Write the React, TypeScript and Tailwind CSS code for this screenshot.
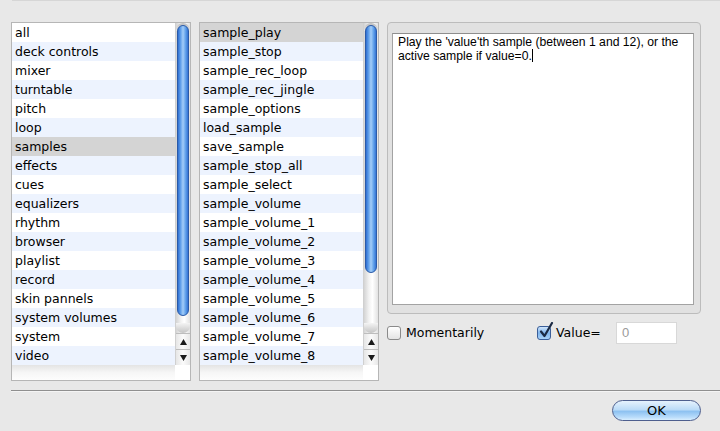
import React from "react";

const list1 = [
  "all",
  "deck controls",
  "mixer",
  "turntable",
  "pitch",
  "loop",
  "samples",
  "effects",
  "cues",
  "equalizers",
  "rhythm",
  "browser",
  "playlist",
  "record",
  "skin pannels",
  "system volumes",
  "system",
  "video",
];

const list2 = [
  "sample_play",
  "sample_stop",
  "sample_rec_loop",
  "sample_rec_jingle",
  "sample_options",
  "load_sample",
  "save_sample",
  "sample_stop_all",
  "sample_select",
  "sample_volume",
  "sample_volume_1",
  "sample_volume_2",
  "sample_volume_3",
  "sample_volume_4",
  "sample_volume_5",
  "sample_volume_6",
  "sample_volume_7",
  "sample_volume_8",
];

function Scrollbar({ thumb }: { thumb: number }) {
  return (
    <div className="w-[15px] h-[342px] flex flex-col border-l border-[#d0d0d0]">
      <div className="relative flex-1 bg-[linear-gradient(to_right,#d4d4d4,#f2f2f2_35%,#ffffff_60%,#e2e2e2)]">
        <div className="absolute left-0 right-0 top-0 h-[8px] rounded-t-full bg-[linear-gradient(to_bottom,#bdbdbd,#e8e8e8)]" />
        <div className="absolute left-0 right-0 bottom-0 h-[10px] rounded-b-full bg-[linear-gradient(to_bottom,#f4f4f4,#c4c4c4)]" />
        <div
          className="absolute left-[1px] right-[1px] top-[2px] rounded-full border border-[#2a5aa8] bg-[linear-gradient(to_right,#2f6fd2,#5f9ee9_25%,#a3cdf8_50%,#64a3eb_75%,#3474d4)]"
          style={{ height: thumb }}
        />
      </div>
      <div className="h-[16px] flex items-center justify-center border-t border-[#bdbdbd] bg-[linear-gradient(to_right,#e6e6e6,#fbfbfb_50%,#e8e8e8)]">
        <svg width="7" height="6" viewBox="0 0 7 6">
          <polygon points="3.5,0 7,6 0,6" fill="#1a1a1a" />
        </svg>
      </div>
      <div className="h-[16px] flex items-center justify-center border-t border-[#bdbdbd] bg-[linear-gradient(to_right,#e6e6e6,#fbfbfb_50%,#e8e8e8)]">
        <svg width="7" height="6" viewBox="0 0 7 6">
          <polygon points="0,0 7,0 3.5,6" fill="#1a1a1a" />
        </svg>
      </div>
    </div>
  );
}

function ListBox({ items, selected, thumb }: { items: string[]; selected: number; thumb: number }) {
  return (
    <div className="w-[180px] h-[359px] border border-[#b6b6b6] bg-white flex flex-col shrink-0">
      <div className="flex h-[342px]">
        <div className="flex-1 flex flex-col">
          {items.map((t, i) => (
            <div
              key={t}
              className={
                "h-[19px] pl-[3px] text-[12.5px] leading-[20px] text-black whitespace-nowrap overflow-hidden " +
                (i === selected ? "bg-[#d4d4d4]" : i % 2 === 1 ? "bg-[#edf3fe]" : "bg-white")
              }
            >
              {t}
            </div>
          ))}
        </div>
        <Scrollbar thumb={thumb} />
      </div>
      <div className="flex h-[15px]">
        <div className="flex-1 bg-[linear-gradient(to_bottom,#e4e4e4,#f6f6f6_50%,#fdfdfd)]" />
        <div className="w-[15px] bg-white" />
      </div>
    </div>
  );
}

export default function App() {
  return (
    <div className="w-[720px] h-[431px] bg-[#e8e8e8] flex flex-col font-['DejaVu_Sans',sans-serif] overflow-hidden">
      <div className="h-px ml-[12px] bg-[#d6d6d6]" />
      <div className="flex pl-[11px] pt-[21px]">
        <ListBox items={list1} selected={6} thumb={291} />
        <div className="ml-[8px]">
          <ListBox items={list2} selected={0} thumb={248} />
        </div>
        <div className="ml-[8px] w-[314px] flex flex-col">
          <div className="h-[292px] border border-[#bcbcbc] rounded-[4px] bg-[#e1e1e1] pl-[4px] pr-[6px] pt-[10px]">
            <div className="h-[272px] bg-white border border-[#a3a3a3] border-t-[#8e8e8e] pl-[5px] pt-[1px] font-['Liberation_Sans',sans-serif] text-[12.2px] leading-[14px] text-black">
              Play the 'value'th sample (between 1 and 12), or the
              <br />
              active sample if value=0.
              <span className="inline-block w-px h-[13px] bg-black align-[-2px]" />
            </div>
          </div>
          <div className="mt-[8px] h-[22px] flex items-center text-[12.5px] text-black">
            <div className="w-[150px] flex items-center">
              <div className="w-[14px] h-[14px] rounded-[3px] border border-[#8a8a8a] bg-[linear-gradient(to_bottom,#ffffff,#e4e4e4)]" />
              <span className="ml-[5px]">Momentarily</span>
            </div>
            <div className="w-[79px] flex items-center">
              <div className="relative w-[14px] h-[14px] rounded-[3px] border border-[#3a5e99] bg-[linear-gradient(to_bottom,#cfe5fb,#7fb4ec_50%,#a9d2f8)]">
                <svg className="absolute left-[1px] -top-[5px]" width="15" height="17" viewBox="0 0 15 17">
                  <path d="M2 9.5 L5.5 14 L13 1" fill="none" stroke="#1b2a44" strokeWidth="2.2" strokeLinecap="round" strokeLinejoin="round" />
                </svg>
              </div>
              <span className="ml-[5px]">Value=</span>
            </div>
            <div className="w-[61px] h-[22px] bg-white border border-[#d8d8d8] pl-[5px] flex items-center text-[#9a9a9a] font-['Liberation_Sans',sans-serif] text-[13px]">
              0
            </div>
          </div>
        </div>
      </div>
      <div className="mt-[9px] ml-[11px] h-px bg-[#8f8f8f]" />
      <div className="h-px ml-[11px] bg-[#f4f4f4]" />
      <div className="mt-[8px] flex justify-end pr-[19px]">
        <div className="w-[89px] h-[21px] rounded-full border border-[#4e5f8e] bg-[linear-gradient(to_bottom,#e6f2fd,#bcdcf8_45%,#8ec2f1_55%,#b8dcfb_85%,#d8eefe)] flex items-center justify-center text-[13px] text-black">
          OK
        </div>
      </div>
    </div>
  );
}
